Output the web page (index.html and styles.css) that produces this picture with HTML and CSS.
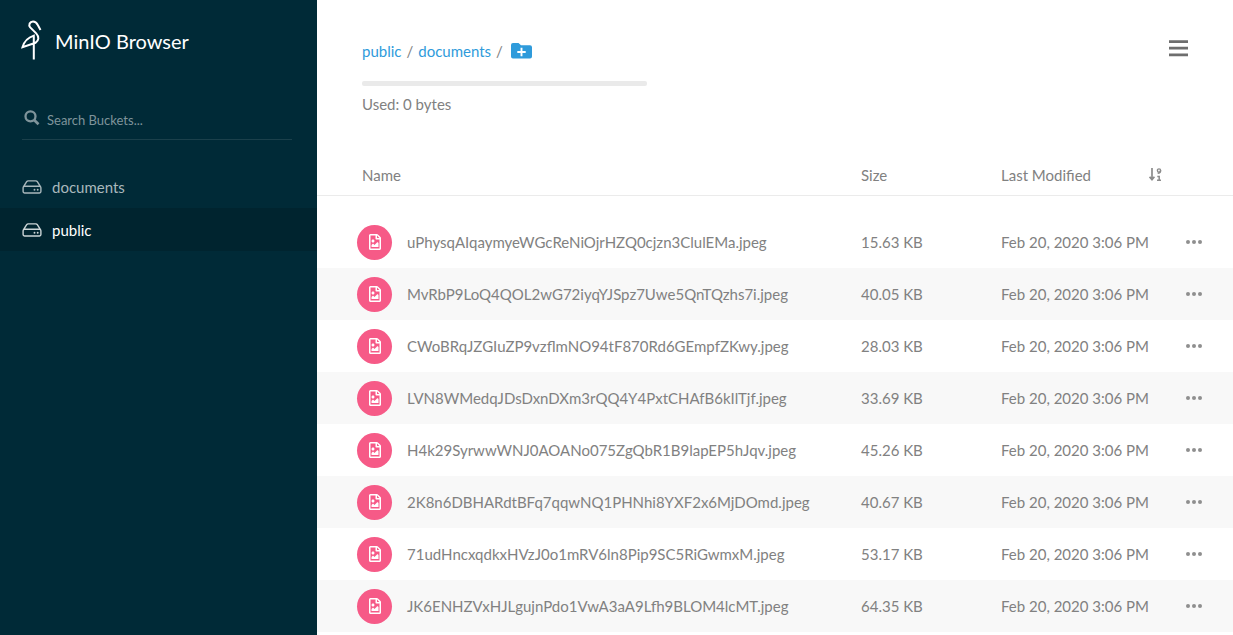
FILE: index.html
```
<!DOCTYPE html>
<html lang="en">
<head>
<meta charset="utf-8">
<title>MinIO Browser</title>
<link rel="stylesheet" href="styles.css">
</head>
<body>
<svg class="defs" aria-hidden="true">
  <symbol id="drive" viewBox="0 0 20 14"><path d="M1.2 7.2 4.7 1.7Q5.2.9 6.2.9H13.8Q14.8.9 15.3 1.7L18.8 7.2M2.5 6.3H17.5Q18.9 6.3 18.9 7.7V11.6Q18.9 13 17.5 13H2.5Q1.1 13 1.1 11.6V7.7Q1.1 6.3 2.5 6.3Z" fill="none" stroke="currentColor" stroke-width="1.4"/><circle cx="12.5" cy="9.8" r=".95" fill="currentColor"/><circle cx="15.7" cy="9.8" r=".95" fill="currentColor"/></symbol>
  <symbol id="image" viewBox="0 0 384 512"><path fill="currentColor" d="M369.9 97.9L286 14C277 5 264.8-.1 252.1-.1H48C21.5 0 0 21.5 0 48v416c0 26.5 21.5 48 48 48h288c26.5 0 48-21.5 48-48V131.9c0-12.7-5.1-25-14.1-34zM332.1 128H256V51.9l76.1 76.1zM48 464V48h160v104c0 13.3 10.7 24 24 24h104v288H48zm32-48h224V288l-23.5-23.5c-4.7-4.7-12.3-4.7-17 0L176 352l-39.5-39.5c-4.7-4.7-12.3-4.7-17 0L80 352v64zm48-240c-26.5 0-48 21.5-48 48s21.5 48 48 48 48-21.5 48-48-21.5-48-48-48z"/></symbol>
  <symbol id="dots" viewBox="0 0 16 4"><g fill="currentColor"><circle cx="2" cy="2" r="2"/><circle cx="8" cy="2" r="2"/><circle cx="14" cy="2" r="2"/></g></symbol>
</svg>
<div class="app">
  <aside class="sidebar">
    <div class="brand">
      <svg class="logo" viewBox="0 0 22 42"><path d="M19.5 10 16.8 5Q15 1.4 12 1.4C8.8 1.4 7.2 5 9.2 7.4L15.2 13.4C18.5 17 17.8 20.8 14.5 22.8L1.5 27.2Q4 18.4 12.8 15.6V39.5" fill="none" stroke="#fff" stroke-width="2"/></svg>
      <span>MinIO Browser</span>
    </div>
    <div class="search">
      <svg class="search-icon" viewBox="0 0 16 16"><circle cx="6.5" cy="6.3" r="5" fill="none" stroke="currentColor" stroke-width="2.3"/><path d="M10.2 10 14.5 14.2" stroke="currentColor" stroke-width="2.7"/></svg>
      <span>Search Buckets...</span>
    </div>
    <nav class="buckets">
      <a class="bucket"><svg class="drive"><use href="#drive"/></svg>documents</a>
      <a class="bucket active"><svg class="drive"><use href="#drive"/></svg>public</a>
    </nav>
  </aside>
  <main class="content">
    <header class="top">
      <div>
        <div class="crumbs"><a>public</a><span class="slash">/</span><a>documents</a><span class="slash">/</span>
          <svg class="folder" viewBox="0 0 21 16"><path d="M2 0H7.5L10 2.3H19Q21 2.3 21 4.3V13.5Q21 15.5 19 15.5H2Q0 15.5 0 13.5V2Q0 0 2 0Z" fill="#2f9bdb"/><path d="M10.5 4.8V13.2M6.3 9H14.7" stroke="#fff" stroke-width="1.9"/></svg>
        </div>
        <div class="usage"></div>
        <div class="used">Used: 0 bytes</div>
      </div>
      <svg class="menu" viewBox="0 0 19 17"><path d="M0 1.6H19M0 8.2H19M0 14.8H19" stroke="#6e6e6e" stroke-width="2.7"/></svg>
    </header>
    <div class="row head"><span class="name">Name</span><span>Size</span><span class="modified">Last Modified
      <svg class="sort" viewBox="0 0 13 14"><path d="M3 0V11M.6 8.8 3 11.6 5.4 8.8" fill="none" stroke="currentColor" stroke-width="1.7"/><circle cx="10" cy="2.5" r="1.6" fill="none" stroke="currentColor" stroke-width="1.4"/><path d="M11.6 2.5Q11.6 5 8.7 5.3M8.3 8.5H10.2V12M8 12.2H12" fill="none" stroke="currentColor" stroke-width="1.5"/></svg></span></div>
    <div class="files">
      <div class="row"><i class="badge"><svg><use href="#image"/></svg></i><span>uPhysqAIqaymyeWGcReNiOjrHZQ0cjzn3ClulEMa.jpeg</span><span>15.63 KB</span><span>Feb 20, 2020 3:06 PM</span><svg class="dots"><use href="#dots"/></svg></div>
      <div class="row"><i class="badge"><svg><use href="#image"/></svg></i><span>MvRbP9LoQ4QOL2wG72iyqYJSpz7Uwe5QnTQzhs7i.jpeg</span><span>40.05 KB</span><span>Feb 20, 2020 3:06 PM</span><svg class="dots"><use href="#dots"/></svg></div>
      <div class="row"><i class="badge"><svg><use href="#image"/></svg></i><span>CWoBRqJZGIuZP9vzflmNO94tF870Rd6GEmpfZKwy.jpeg</span><span>28.03 KB</span><span>Feb 20, 2020 3:06 PM</span><svg class="dots"><use href="#dots"/></svg></div>
      <div class="row"><i class="badge"><svg><use href="#image"/></svg></i><span>LVN8WMedqJDsDxnDXm3rQQ4Y4PxtCHAfB6kIlTjf.jpeg</span><span>33.69 KB</span><span>Feb 20, 2020 3:06 PM</span><svg class="dots"><use href="#dots"/></svg></div>
      <div class="row"><i class="badge"><svg><use href="#image"/></svg></i><span>H4k29SyrwwWNJ0AOANo075ZgQbR1B9lapEP5hJqv.jpeg</span><span>45.26 KB</span><span>Feb 20, 2020 3:06 PM</span><svg class="dots"><use href="#dots"/></svg></div>
      <div class="row"><i class="badge"><svg><use href="#image"/></svg></i><span>2K8n6DBHARdtBFq7qqwNQ1PHNhi8YXF2x6MjDOmd.jpeg</span><span>40.67 KB</span><span>Feb 20, 2020 3:06 PM</span><svg class="dots"><use href="#dots"/></svg></div>
      <div class="row"><i class="badge"><svg><use href="#image"/></svg></i><span>71udHncxqdkxHVzJ0o1mRV6ln8Pip9SC5RiGwmxM.jpeg</span><span>53.17 KB</span><span>Feb 20, 2020 3:06 PM</span><svg class="dots"><use href="#dots"/></svg></div>
      <div class="row"><i class="badge"><svg><use href="#image"/></svg></i><span>JK6ENHZVxHJLgujnPdo1VwA3aA9Lfh9BLOM4lcMT.jpeg</span><span>64.35 KB</span><span>Feb 20, 2020 3:06 PM</span><svg class="dots"><use href="#dots"/></svg></div>
    </div>
  </main>
</div>
</body>
</html>
```

FILE: styles.css
```
* { box-sizing: border-box; }
body { margin: 0; font: 15px/20px Lato, sans-serif; color: #818181; background: #fff; }
svg { display: block; flex: none; }
.defs { display: none; }
.app { display: flex; height: 635px; overflow: hidden; }
.sidebar { width: 317px; flex: none; background: #002a37; }
.brand { display: flex; align-items: center; gap: 12px; height: 82px; padding-left: 21px; color: #fff; font-size: 20px; }
.logo { width: 22px; height: 42px; }
.search { display: flex; align-items: center; gap: 7px; width: 270px; height: 40px; margin: 18px 0 0 22px; padding-left: 2px; border-bottom: 1px solid #1b404b; color: #7f949b; font-size: 13px; }
.search-icon { width: 16px; height: 16px; margin-top: -3px; }
.buckets { margin-top: 25px; }
.bucket { display: flex; align-items: center; gap: 10px; height: 43px; padding-left: 22px; color: #a9b8bc; }
.bucket.active { color: #fff; background: #00242f; }
.drive { width: 20px; height: 14px; color: #a9b8bc; }
.active .drive { color: #ccd5d7; }
.content { flex: 1; min-width: 0; }
.top { display: flex; justify-content: space-between; height: 154px; padding: 40px 45px 0; }
.crumbs { display: flex; align-items: center; height: 22px; color: #818181; }
.crumbs a { color: #2f9bdb; }
.slash { margin: 0 5px; }
.folder { width: 21px; height: 16px; margin-left: 3px; }
.usage { width: 285px; height: 5px; margin-top: 19px; border-radius: 2px; background: #eaeaea; }
.used { margin-top: 8px; }
.menu { width: 19px; height: 17px; }
.row { display: grid; grid-template-columns: 50px 454px 140px 185px 16px; align-items: center; height: 52px; padding-left: 40px; white-space: nowrap; }
.head { grid-template-columns: 499px 140px 185px; height: 42px; padding-left: 45px; border-bottom: 1px solid #ebebeb; }
.modified { display: flex; justify-content: space-between; width: 161px; align-items: center; }
.sort { width: 13px; height: 14px; color: #8c8c8c; }
.files { padding-top: 20px; }
.files .row:nth-child(even) { background: #f8f8f8; }
.badge { display: grid; place-items: center; width: 35px; height: 35px; border-radius: 50%; background: #f65a87; color: #fff; }
.badge svg { width: 12px; height: 16px; }
.dots { width: 16px; height: 4px; color: #8f8f8f; }
```
